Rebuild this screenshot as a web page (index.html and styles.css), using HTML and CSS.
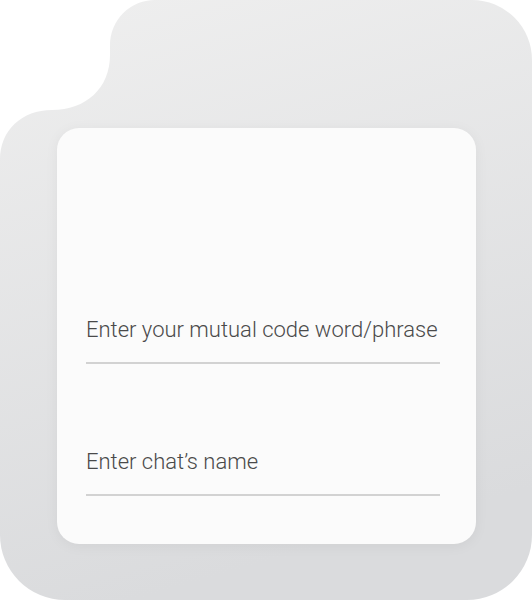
FILE: index.html
```html
<!DOCTYPE html>
<html lang="en">
<head>
<meta charset="utf-8">
<title>Chat setup</title>
<link rel="stylesheet" href="styles.css">
</head>
<body>
<div class="screen">
  <svg class="backdrop" width="532" height="600" viewBox="0 0 532 600" aria-hidden="true">
    <defs>
      <linearGradient id="bg" x1="0" y1="0" x2="0.25" y2="1">
        <stop offset="0" stop-color="#efefef"/>
        <stop offset="1" stop-color="#dadbdd"/>
      </linearGradient>
    </defs>
    <path fill="url(#bg)" d="M155 0 H472 A60 60 0 0 1 532 60 V535 A65 65 0 0 1 467 600 H65 A65 65 0 0 1 0 535 V160 C0 130 22 110 52 110 C86 110 110 88 110 55 V46 C110 20 130 0 155 0 Z"/>
  </svg>
  <div class="card">
    <div class="field">Enter your mutual code word/phrase</div>
    <div class="field">Enter chat’s name</div>
  </div>
</div>
</body>
</html>
```
FILE: styles.css
```css
html, body {
  margin: 0;
  padding: 0;
  background: #ffffff;
}
body {
  font-family: Roboto, "Liberation Sans", sans-serif;
}
.screen {
  position: relative;
  width: 532px;
  height: 600px;
  box-sizing: border-box;
  padding: 128px 56px 56px 57px;
}
.backdrop {
  position: absolute;
  left: 0;
  top: 0;
}
.card {
  position: relative;
  height: 416px;
  box-sizing: border-box;
  background: #fbfbfb;
  border-radius: 22px;
  box-shadow: 0 2px 14px rgba(0, 0, 0, 0.05);
  display: flex;
  flex-direction: column;
  justify-content: flex-end;
  gap: 84px;
  padding: 0 36px 48px 29px;
}
.field {
  font-size: 22px;
  font-weight: 300;
  line-height: 28px;
  color: #4a4a4a;
  letter-spacing: 0;
  padding-bottom: 18px;
  border-bottom: 2px solid #d2d2d2;
  white-space: nowrap;
}
```
